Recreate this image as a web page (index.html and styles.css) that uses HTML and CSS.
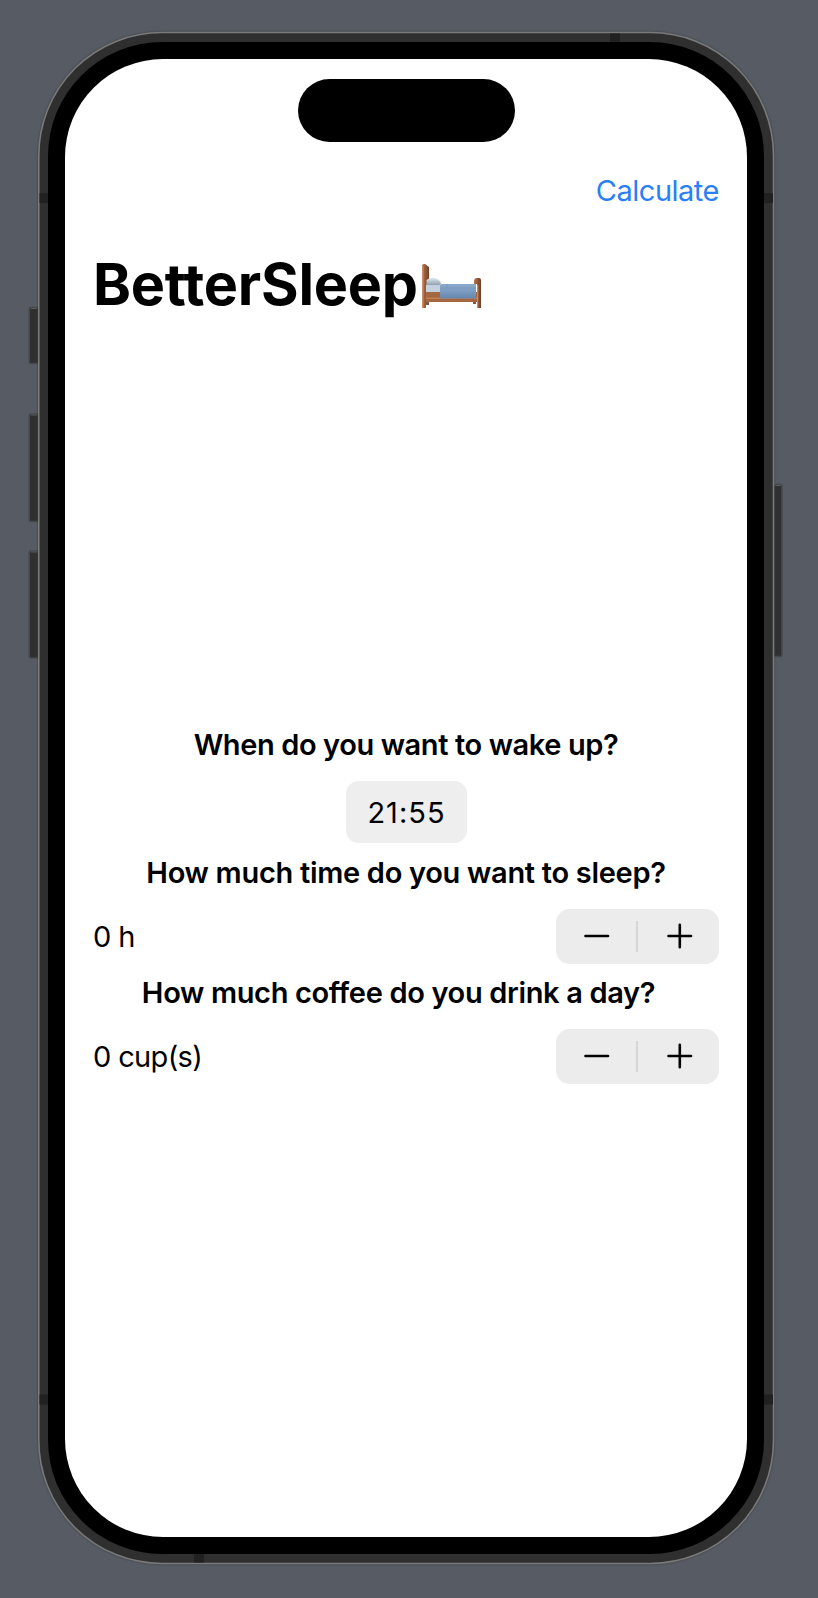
FILE: index.html
```html
<!DOCTYPE html>
<html lang="en">
<head>
<meta charset="utf-8">
<title>BetterSleep</title>
<link rel="stylesheet" href="styles.css">
</head>
<body>
<div class="stage">
  <svg class="device" viewBox="0 0 818 1598" aria-hidden="true">
    <g class="side-buttons">
      <rect x="29.3" y="307.500" width="12" height="56" rx="1.5"/>
      <rect x="29.3" y="414" width="12" height="107.500" rx="1.5"/>
      <rect x="29.3" y="551" width="12" height="107" rx="1.5"/>
      <rect x="770" y="484.500" width="12" height="172" rx="1.5"/>
    </g>
    <path class="button-shine" d="M31 308.500h6M31 415h6M31 552h6M775 485.500h6"/>
    <rect class="frame" x="38.800" y="32.500" width="734.700" height="1531" rx="123"/>
    <path class="bands" d="M39.500 193h9v10h-9zM764 193h9v10h-9zM39.500 1394.500h9v10h-9zM764 1394.500h9v10h-9zM610 33.500h10v9h-10zM194 1553.500h10v9h-10z"/>
    <rect class="bezel" x="48" y="42" width="716" height="1512" rx="114"/>
    <rect class="screen" x="65" y="59" width="682" height="1478" rx="98"/>
  </svg>

  <main class="app">
    <div class="island"></div>
    <nav class="toolbar"><a class="calculate">Calculate</a></nav>
    <h1 class="title"><span>BetterSleep</span>
      <svg class="bed" viewBox="0 0 60 46" role="img" aria-label="bed">
        <defs>
          <linearGradient id="blanket" x2="0" y2="1"><stop stop-color="#8ba9cb"/><stop offset=".3" stop-color="#86a3c6"/><stop offset="1" stop-color="#6486ae"/></linearGradient>
          <linearGradient id="wood"><stop stop-color="#b97952"/><stop offset=".4" stop-color="#9c5d3c"/><stop offset="1" stop-color="#71412a"/></linearGradient>
          <linearGradient id="pillow" x2="0" y2="1"><stop stop-color="#e3edf4"/><stop offset="1" stop-color="#8fa0ac"/></linearGradient>
        </defs>
        <path fill="#87563a" d="M5 36h3v6H5zM52 36h3v5h-3z"/>
        <path fill="#c2d1dd" d="M5 22h15v8H5z"/>
        <path fill="#a5673f" d="M4 29h52v10H4z"/>
        <path fill="#c08056" d="M4 34.500h52v1.500H4z"/>
        <path fill="url(#wood)" d="M1 2.500q0-1.500 2-1.500h1l4 3v17l-3 1v23H1z"/>
        <path fill="#c58b66" d="M1 3h1.500v42H1z"/>
        <path fill="url(#wood)" d="M53 17q1-2 3-2h2q2 0 2 2v28h-4V21h-3z"/>
        <path fill="#c58b66" d="M56 22h1.200v23H56z"/>
        <path fill="url(#pillow)" d="M5.500 17q4-3 8.500-2q4 1 6 5q0 2-3 2H5.500z"/>
        <path fill="url(#blanket)" d="M19 22.500q0-1.500 1.500-1.500H55v12.500q0 2-2 2H19z"/>
        <path fill="none" stroke="#6686af" stroke-width=".7" d="M26 21v4M19.500 25H55" opacity=".6"/>
      </svg>
    </h1>

    <section class="form">
      <h2 class="question q-wake">When do you want to wake up?</h2>
      <div class="time">21:55</div>
      <h2 class="question q-sleep">How much time do you want to sleep?</h2>
      <div class="row">
        <span class="value">0 h</span>
        <div class="stepper">
          <svg class="sign" viewBox="0 0 26 26"><path d="M1.500 13h22.500"/></svg>
          <i class="divider"></i>
          <svg class="sign" viewBox="0 0 26 26"><path d="M1.500 13h22.500M12.800 1.700v22.600"/></svg>
        </div>
      </div>
      <h2 class="question q-coffee">How much coffee do you drink a day?</h2>
      <div class="row">
        <span class="value">0 cup(s)</span>
        <div class="stepper">
          <svg class="sign" viewBox="0 0 26 26"><path d="M1.500 13h22.500"/></svg>
          <i class="divider"></i>
          <svg class="sign" viewBox="0 0 26 26"><path d="M1.500 13h22.500M12.800 1.700v22.600"/></svg>
        </div>
      </div>
    </section>
  </main>
</div>
</body>
</html>
```
FILE: styles.css
```css
* { box-sizing: border-box; }

body {
  margin: 0;
  background: #575c64;
  color: #000;
  font-family: Inter, Roboto, sans-serif;
}

.stage {
  position: relative;
  width: 818px;
  height: 1598px;
  overflow: hidden;
}

/* Phone hardware behind the app */
.device {
  position: absolute;
  inset: 0;
  width: 818px;
  height: 1598px;
}

.side-buttons rect { fill: #303030; stroke: #45484c; stroke-width: 1.5; }
.button-shine { stroke: #5b5c5d; stroke-width: 1; }
.frame { fill: #2f2f2f; stroke: #7a7a7a; stroke-width: 1.6; filter: drop-shadow(0 0 1px #383b3f); }
.bands { fill: #212121; }
.bezel { fill: #000; }
.screen { fill: #fff; }

.app {
  position: relative;
  display: flex;
  flex-direction: column;
  width: 626px;
  margin-left: 93px;
  padding-top: 78.5px;
}

.island {
  align-self: center;
  width: 217px;
  height: 63.5px;
  border-radius: 32px;
  background: #000;
}

.toolbar {
  display: flex;
  justify-content: flex-end;
  margin-top: 28.6px;
}

.calculate {
  color: #2b7ff6;
  font-size: 29px;
  line-height: 40px;
  letter-spacing: -0.5px;
}

.title {
  display: flex;
  align-items: center;
  margin: 38.4px 0 0;
  font-size: 57.5px;
  font-weight: 700;
  line-height: 70px;
  letter-spacing: -0.25px;
}

.bed {
  width: 60px;
  height: 46px;
  margin-left: 3px;
  margin-top: 4px;
}

.form {
  display: flex;
  flex-direction: column;
  margin-top: 405.6px;
}

.question {
  align-self: center;
  margin: 0;
  font-size: 29px;
  font-weight: 600;
  line-height: 40px;
  white-space: nowrap;
}

.q-wake { letter-spacing: -0.4px; }
.q-sleep { letter-spacing: -0.3px; }
.q-coffee { margin-right: 15px; letter-spacing: -0.35px; }

.time {
  align-self: center;
  width: 121px;
  height: 62.5px;
  margin: 16.4px 0 9.6px;
  border-radius: 13px;
  background: #eee;
  font-size: 29px;
  line-height: 64px;
  letter-spacing: 1px;
  text-indent: 1px;
  text-align: center;
}

.row {
  display: flex;
  align-items: center;
  justify-content: space-between;
  height: 55.4px;
  margin: 15.6px 0 9px;
}

.value {
  padding-top: 1.5px;
  font-size: 29px;
  line-height: 40px;
  letter-spacing: -0.65px;
}

.stepper {
  display: flex;
  align-items: center;
  justify-content: space-between;
  width: 163px;
  height: 55.4px;
  padding: 0 26.5px 0 27.5px;
  border-radius: 14px;
  background: #ececec;
}

.sign {
  width: 26px;
  height: 26px;
  fill: none;
  stroke: #000;
  stroke-width: 2.6;
  stroke-linecap: round;
}

.divider {
  width: 2px;
  height: 31px;
  margin-right: 3px;
  background: #d6d6d7;
}
```
